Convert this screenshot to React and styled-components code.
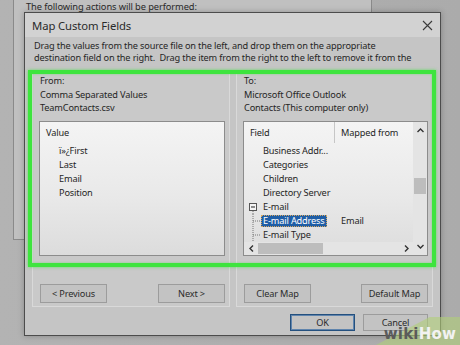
import React from "react";
import styled, { createGlobalStyle } from "styled-components";

const GlobalStyle = createGlobalStyle`
  html, body { margin: 0; padding: 0; }
  body {
    width: 460px;
    height: 345px;
    overflow: hidden;
    background: #aaaaaa;
    font-family: "Noto Sans", "Open Sans", sans-serif;
    color: #252525;
  }
`;

const Desktop = styled.div`
  position: relative;
  width: 460px;
  height: 345px;
  overflow: hidden;
  background: linear-gradient(90deg, #b3b3b3 0%, #ababab 100%);
`;

const BackWindow = styled.div`
  position: absolute;
  left: 13px;
  top: -30px;
  width: 359px;
  height: 270px;
  box-sizing: border-box;
  background: #c0c0c0;
  border: 1px solid #8a8a8a;
  padding: 30px 0 0 12px;
`;

const BackText = styled.div`
  font-size: 9.3px;
  letter-spacing: -0.1px;
  line-height: 12px;
  color: #2a2a2a;
`;

const Dialog = styled.div`
  position: absolute;
  left: 24px;
  top: 12px;
  width: 417px;
  height: 324px;
  box-sizing: border-box;
  background: #c5c5c5;
  border: 1px solid #4c4c4c;
  display: flex;
  flex-direction: column;
  box-shadow: 0 0 6px rgba(0, 0, 0, 0.25);
`;

const TitleBar = styled.div`
  height: 24px;
  flex: none;
  display: flex;
  align-items: center;
  justify-content: space-between;
  padding: 0 7px 0 7px;
  background: #d2d2d2;
`;

const Title = styled.span`
  font-size: 11.3px;
  letter-spacing: -0.1px;
  color: #2a2a2a;
`;

const Body = styled.div`
  position: relative;
  flex: 1;
  display: flex;
  flex-direction: column;
  padding: 3px 7px 4px 7px;
  font-size: 9.2px;
  letter-spacing: -0.15px;
`;

const Instructions = styled.div`
  line-height: 11.5px;
  height: 23px;
  padding-left: 2px;
  white-space: nowrap;
  color: #262626;
`;

const Panels = styled.div`
  display: grid;
  grid-template-columns: 198px 197px;
  gap: 6px;
  margin-top: 9px;
`;

const Panel = styled.div`
  height: 235px;
  box-sizing: border-box;
  border: 1px solid #d9d9d9;
  background: #c9c9c9;
  padding: 0 4px 3px 6px;
  display: flex;
  flex-direction: column;
`;

const Labels = styled.div`
  padding: 1px 0 0 1px;
  line-height: 13.5px;
`;

const ListBox = styled.div`
  margin-top: 6px;
  height: 135px;
  box-sizing: border-box;
  border: 1px solid #8c8c8c;
  background: linear-gradient(180deg, #f4f4f4 0%, #e9e9e9 55%, #dcdcdc 100%);
  display: grid;
  grid-template-columns: ${(p) => (p.$scroll ? "1fr 14px" : "1fr")};
  grid-template-rows: ${(p) => (p.$scroll ? "1fr 13px" : "1fr")};
  overflow: hidden;
`;

const ListContent = styled.div`
  overflow: hidden;
`;

const Header = styled.div`
  height: 21px;
  display: grid;
  grid-template-columns: ${(p) => p.$cols || "1fr"};
  align-items: stretch;
`;

const HeaderCell = styled.div`
  display: flex;
  align-items: center;
  padding-left: 6px;
  border-right: ${(p) => (p.$sep ? "1px solid #c6c6c6" : "none")};
`;

const Rows = styled.div`
  padding-top: 1px;
`;

const Row = styled.div`
  height: 14px;
  display: grid;
  grid-template-columns: ${(p) => p.$cols || "1fr"};
  align-items: center;
`;

const FieldCell = styled.div`
  display: flex;
  align-items: center;
  height: 14px;
  white-space: nowrap;
`;

const Gutter = styled.span`
  width: 19px;
  height: 14px;
  flex: none;
  display: flex;
`;

const Item = styled.span`
  line-height: 12px;
  padding: 0 2px;
  margin-left: -2px;
  ${(p) =>
    p.$selected &&
    `
    background: #1f5ea6;
    color: #ffffff;
    outline: 1px dotted #d8a860;
    outline-offset: -1px;
  `}
`;

const MappedCell = styled.div`
  padding-left: 6px;
`;

const VScroll = styled.div`
  grid-row: 1 / 3;
  grid-column: 2;
  background: #e4e4e4;
  display: flex;
  flex-direction: column;
`;

const HScroll = styled.div`
  background: #e4e4e4;
  display: flex;
  align-items: center;
`;

const Arrow = styled.div`
  flex: none;
  width: ${(p) => p.$w || 14}px;
  height: ${(p) => p.$h || 14}px;
  display: flex;
  align-items: center;
  justify-content: center;
`;

const VTrack = styled.div`
  flex: 1;
  display: flex;
  flex-direction: column;
`;

const VThumb = styled.div`
  margin-top: 39px;
  height: 16px;
  margin-left: 1px;
  margin-right: 1px;
  background: #bdbdbd;
`;

const HTrack = styled.div`
  flex: 1;
  height: 100%;
  display: flex;
  align-items: stretch;
  padding: 1px 0;
  box-sizing: border-box;
`;

const HThumb = styled.div`
  width: 65px;
  background: #bdbdbd;
`;

const ButtonRow = styled.div`
  margin-top: auto;
  display: flex;
  justify-content: space-between;
  padding-left: 1px;
`;

const Button = styled.div`
  width: ${(p) => p.$w || 67}px;
  height: ${(p) => p.$h || 19}px;
  box-sizing: border-box;
  display: flex;
  align-items: center;
  justify-content: center;
  color: #2b2b2b;
  background: #c3c3c3;
  border: 1px solid ${(p) => (p.$default ? "#24507e" : "#9c9c9c")};
  box-shadow: ${(p) => (p.$default ? "inset 0 0 0 1px #5f84ad" : "none")};
`;

const Footer = styled.div`
  margin-top: 7px;
  display: flex;
  justify-content: flex-end;
  gap: 8px;
  padding-right: 5px;
`;

const Highlight = styled.div`
  position: absolute;
  left: 3px;
  top: 33px;
  width: 408px;
  height: 197px;
  box-sizing: border-box;
  border: 4px solid #3ee43e;
  box-shadow: 0 0 3px rgba(60, 230, 60, 0.7), inset 0 0 2px rgba(60, 230, 60, 0.6);
  pointer-events: none;
`;

const Watermark = styled.div`
  position: absolute;
  right: 0;
  bottom: 0;
  width: 84px;
  height: 28px;
  display: flex;
  align-items: flex-end;
  justify-content: flex-end;
  padding: 0 4px 3px 0;
  box-sizing: border-box;
  font-family: "DejaVu Sans", sans-serif;
  font-weight: bold;
  font-size: 15px;
  line-height: 16px;
  letter-spacing: 0.2px;

  &::before {
    content: "";
    position: absolute;
    inset: 0;
    background: rgba(176, 206, 120, 0.6);
    clip-path: polygon(0 100%, 64% 0, 100% 0, 100% 100%);
  }
`;

const WikiPart = styled.span`
  position: relative;
  color: #5b5b5b;
`;

const HowPart = styled.span`
  position: relative;
  color: #f2f2f2;
`;

const Chevron = ({ dir }) => {
  const paths = {
    up: "M1.5 5 L4.5 2 L7.5 5",
    down: "M1.5 2 L4.5 5 L7.5 2",
    left: "M5 1.5 L2 4.5 L5 7.5",
    right: "M2 1.5 L5 4.5 L2 7.5",
  };
  const vertical = dir === "up" || dir === "down";
  return (
    <svg width={vertical ? 9 : 7} height={vertical ? 7 : 9} viewBox={vertical ? "0 0 9 7" : "0 0 7 9"}>
      <path d={paths[dir]} fill="none" stroke="#333" strokeWidth="1.4" />
    </svg>
  );
};

const CloseIcon = () => (
  <svg width="11" height="11" viewBox="0 0 11 11">
    <path d="M1 1 L10 10 M10 1 L1 10" stroke="#3a3a3a" strokeWidth="1.1" />
  </svg>
);

const MinusBox = () => (
  <svg width="19" height="14" viewBox="0 0 19 14">
    <rect x="5.5" y="3.5" width="7" height="7" fill="#f4f4f4" stroke="#555" />
    <path d="M7 7 H11" stroke="#222" />
    <path d="M9 11 V14" stroke="#777" strokeDasharray="1 1" />
  </svg>
);

const TreeLine = () => (
  <svg width="19" height="14" viewBox="0 0 19 14">
    <path d="M9 0 V14" stroke="#777" strokeDasharray="1 1" />
    <path d="M9 7 H17" stroke="#777" strokeDasharray="1 1" />
  </svg>
);

const leftItems = ["ï»¿First", "Last", "Email", "Position"];

const rightCols = "91px 1fr";

const rightRows = [
  { field: "Business Addr..." },
  { field: "Categories" },
  { field: "Children" },
  { field: "Directory Server" },
  { field: "E-mail", expander: true },
  { field: "E-mail Address", mapped: "Email", child: true, selected: true },
  { field: "E-mail Type", child: true },
];

export default function App() {
  return (
    <>
      <GlobalStyle />
      <Desktop>
        <BackWindow>
          <BackText>The following actions will be performed:</BackText>
        </BackWindow>
        <Dialog>
          <TitleBar>
            <Title>Map Custom Fields</Title>
            <CloseIcon />
          </TitleBar>
          <Body>
            <Instructions>
              Drag the values from the source file on the left, and drop them on the appropriate
              <br />
              destination field on the right.&nbsp; Drag the item from the right to the left to remove it from the
            </Instructions>
            <Panels>
              <Panel>
                <Labels>
                  <div>From:</div>
                  <div>Comma Separated Values</div>
                  <div>TeamContacts.csv</div>
                </Labels>
                <ListBox>
                  <ListContent>
                    <Header>
                      <HeaderCell>Value</HeaderCell>
                    </Header>
                    <Rows>
                      {leftItems.map((t) => (
                        <Row key={t}>
                          <FieldCell>
                            <Gutter />
                            <Item>{t}</Item>
                          </FieldCell>
                        </Row>
                      ))}
                    </Rows>
                  </ListContent>
                </ListBox>
                <ButtonRow>
                  <Button>&lt; Previous</Button>
                  <Button>Next &gt;</Button>
                </ButtonRow>
              </Panel>
              <Panel>
                <Labels>
                  <div>To:</div>
                  <div>Microsoft Office Outlook</div>
                  <div>Contacts (This computer only)</div>
                </Labels>
                <ListBox $scroll>
                  <ListContent>
                    <Header $cols={rightCols}>
                      <HeaderCell $sep>Field</HeaderCell>
                      <HeaderCell>Mapped from</HeaderCell>
                    </Header>
                    <Rows>
                      {rightRows.map((r) => (
                        <Row key={r.field} $cols={rightCols}>
                          <FieldCell>
                            <Gutter>
                              {r.expander && <MinusBox />}
                              {r.child && <TreeLine />}
                            </Gutter>
                            <Item $selected={r.selected}>{r.field}</Item>
                          </FieldCell>
                          <MappedCell>{r.mapped || ""}</MappedCell>
                        </Row>
                      ))}
                    </Rows>
                  </ListContent>
                  <VScroll>
                    <Arrow $h={17}>
                      <Chevron dir="up" />
                    </Arrow>
                    <VTrack>
                      <VThumb />
                    </VTrack>
                    <Arrow $h={17}>
                      <Chevron dir="down" />
                    </Arrow>
                  </VScroll>
                  <HScroll>
                    <Arrow $w={14} $h={13}>
                      <Chevron dir="left" />
                    </Arrow>
                    <HTrack>
                      <HThumb />
                    </HTrack>
                    <Arrow $w={14} $h={13}>
                      <Chevron dir="right" />
                    </Arrow>
                  </HScroll>
                </ListBox>
                <ButtonRow>
                  <Button>Clear Map</Button>
                  <Button>Default Map</Button>
                </ButtonRow>
              </Panel>
            </Panels>
            <Footer>
              <Button $default $w={65} $h={17}>OK</Button>
              <Button $w={65} $h={17}>Cancel</Button>
            </Footer>
            <Highlight />
          </Body>
        </Dialog>
        <Watermark>
          <WikiPart>wiki</WikiPart>
          <HowPart>How</HowPart>
        </Watermark>
      </Desktop>
    </>
  );
}
